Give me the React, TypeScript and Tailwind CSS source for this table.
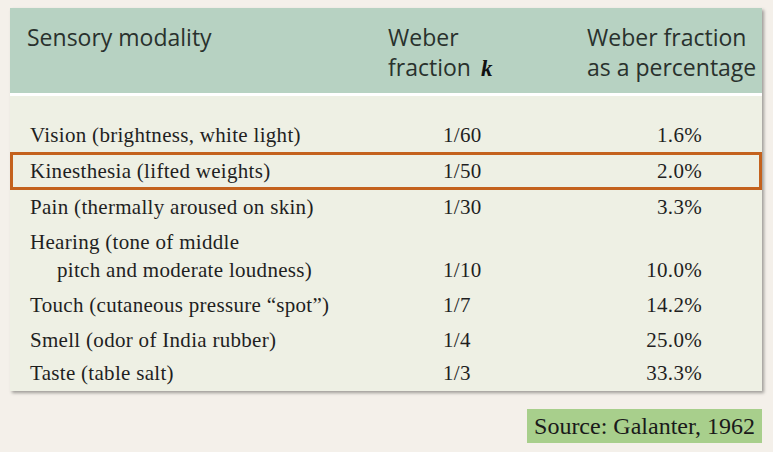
const rows = [
  { name: ["Vision (brightness, white light)"], k: "1/60", pct: "1.6%", cls: "py-[3.5px]" },
  { name: ["Kinesthesia (lifted weights)"], k: "1/50", pct: "2.0%", cls: "py-[5px] ring-3 ring-inset ring-[#c4621d]", },
  { name: ["Pain (thermally aroused on skin)"], k: "1/30", pct: "3.3%", cls: "py-[3px]" },
  { name: ["Hearing (tone of middle", "pitch and moderate loudness)"], k: "1/10", pct: "10.0%", cls: "py-[3.5px]" },
  { name: ["Touch (cutaneous pressure \u201cspot\u201d)"], k: "1/7", pct: "14.2%", cls: "py-[3.5px]" },
  { name: ["Smell (odor of India rubber)"], k: "1/4", pct: "25.0%", cls: "py-[3.5px]" },
  { name: ["Taste (table salt)"], k: "1/3", pct: "33.3%", cls: "py-[2px]" },
];

export default function App() {
  return (
    <div className="w-[773px] h-[452px] bg-[#f4f0ea] pt-2 pl-[10px] overflow-hidden">
      <div className="w-[752px] bg-[#eef0e4] shadow-[2px_2px_3px_rgba(0,0,0,0.35)]">
        {/* header */}
        <div className="grid grid-cols-[378px_199px_1fr] h-[85px] bg-[#b7d2c2] pt-[14px] text-[23px] leading-[30px] font-medium text-[#29312d] font-['Open_Sans',sans-serif]">
          <div className="pl-[17px]">Sensory modality</div>
          <div>
            Weber
            <br />
            fraction{" "}
            <span className="ml-1 font-['Liberation_Serif',serif] font-bold italic text-[#111]">k</span>
          </div>
          <div className="whitespace-nowrap">
            Weber fraction
            <br />
            as a percentage
          </div>
        </div>
        <div className="h-[3px] bg-white" />

        {/* body */}
        <div className="pt-[21px] pb-[2px] font-['Liberation_Serif',serif] text-[21px] tracking-[0.3px] leading-[28px] text-[#1f1f1f]">
          {rows.map((r) => (
            <div key={r.k} className={`grid grid-cols-[378px_199px_1fr] ${r.cls}`}>
              <div className="pl-[20px] whitespace-nowrap">
                {r.name.map((line, i) => (
                  <div key={i} className={i > 0 ? "pl-[27px]" : ""}>
                    {line}
                  </div>
                ))}
              </div>
              <div className="pl-[55px] self-end">{r.k}</div>
              <div className="pr-[60px] text-right self-end">{r.pct}</div>
            </div>
          ))}
        </div>
      </div>

      <div className="flex justify-end pr-[11px] mt-[18px]">
        <div className="h-[34px] bg-[#a8cf8c] px-[7px] font-['Liberation_Serif',serif] text-[24px] leading-[34px] text-[#1a1a1a]">
          Source: Galanter, 1962
        </div>
      </div>
    </div>
  );
}
